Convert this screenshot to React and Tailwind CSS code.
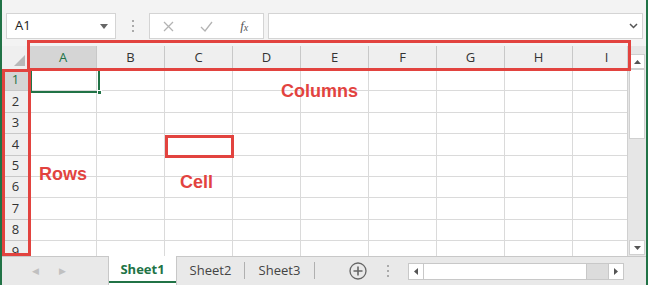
import React from 'react';

const cols = ['A', 'B', 'C', 'D', 'E', 'F', 'G', 'H', 'I'];
const rows = [1, 2, 3, 4, 5, 6, 7, 8, 9];

function App() {
  return (
    <div className="relative w-[648px] h-[285px] overflow-hidden bg-[#f3f3f3] border-l-2 border-r-2 border-[#217346] font-['Open_Sans',sans-serif] text-[#333]">
      {/* formula bar */}
      <div className="flex items-start h-[46px] pt-[13px] pl-[4px]">
        <div className="flex items-center w-[110px] h-[26px] bg-white border border-[#d4d4d4] pl-[8px] pr-[7px]">
          <span className="text-[13px] text-[#222] flex-1">A1</span>
          <svg width="8" height="5" viewBox="0 0 8 5"><path d="M0 0h8L4 5z" fill="#666" /></svg>
        </div>
        <div className="w-[33px] h-[26px] flex flex-col items-center justify-center gap-[3px]">
          <span className="w-[2px] h-[2px] bg-[#aaa]" />
          <span className="w-[2px] h-[2px] bg-[#aaa]" />
          <span className="w-[2px] h-[2px] bg-[#aaa]" />
        </div>
        <div className="flex items-center w-[115px] h-[26px] bg-white border border-[#d4d4d4]">
          <div className="w-[38px] flex justify-center">
            <svg width="11" height="11" viewBox="0 0 11 11"><path d="M1 1l9 9M10 1l-9 9" stroke="#b3b3b3" strokeWidth="1.3" /></svg>
          </div>
          <div className="w-[38px] flex justify-center">
            <svg width="13" height="11" viewBox="0 0 13 11"><path d="M1 6l4 4 7-9" stroke="#b3b3b3" strokeWidth="1.3" fill="none" /></svg>
          </div>
          <div className="w-[38px] flex justify-center font-['Liberation_Serif',serif] italic text-[13px] text-[#555]">
            f<span className="text-[10px] mt-[4px]">x</span>
          </div>
        </div>
        <div className="flex items-center justify-end w-[375px] h-[26px] ml-[4px] bg-white border border-[#d4d4d4] pr-[4px]">
          <svg width="9" height="6" viewBox="0 0 9 6"><path d="M1 1l3.5 3.5L8 1" stroke="#555" strokeWidth="1.5" fill="none" /></svg>
        </div>
      </div>

      {/* sheet area */}
      <div className="flex h-[210px] bg-white">
        <div className="w-[625px] overflow-hidden">
          <div className="flex h-[24px] bg-[#efefef] border-b border-[#c8c8c8]">
            <div className="relative w-[28px] shrink-0 border-r border-[#c8c8c8]">
              <svg className="absolute right-[4px] bottom-[3px]" width="11" height="11" viewBox="0 0 11 11"><path d="M11 0v11H0z" fill="#b8b8b8" /></svg>
            </div>
            {cols.map((c, i) => (
              <div
                key={c}
                className={`shrink-0 flex items-center justify-center text-[13px] border-r border-[#c8c8c8] ${
                  i === 0 ? 'w-[67px] bg-[#d5d5d5] text-[#217346]' : 'w-[68px] text-[#333]'
                }`}
              >
                {c}
              </div>
            ))}
          </div>
          {rows.map((r) => (
            <div key={r} className="flex h-[21.4px]">
              <div
                className={`w-[28px] shrink-0 flex items-center justify-center text-[13px] border-r border-b border-[#c8c8c8] ${
                  r === 1 ? 'bg-[#d5d5d5] text-[#217346]' : 'bg-[#efefef] text-[#333]'
                }`}
              >
                {r}
              </div>
              {cols.map((c, i) => (
                <div
                  key={c}
                  className={`shrink-0 border-r border-b border-[#dadada] ${i === 0 ? 'w-[67px]' : 'w-[68px]'}`}
                />
              ))}
            </div>
          ))}
        </div>
        <div className="flex flex-col w-[19px] bg-[#e6e6e6] border-l border-[#d0d0d0] pt-[8px] pb-[1px] px-[1px]">
          <div className="h-[15px] bg-white border border-[#d0d0d0] flex items-center justify-center">
            <svg width="7" height="4" viewBox="0 0 7 4"><path d="M0 4h7L3.5 0z" fill="#555" /></svg>
          </div>
          <div className="h-[70px] bg-white border border-[#d0d0d0]" />
          <div className="flex-1" />
          <div className="h-[15px] bg-white border border-[#d0d0d0] flex items-center justify-center">
            <svg width="7" height="4" viewBox="0 0 7 4"><path d="M0 0h7L3.5 4z" fill="#555" /></svg>
          </div>
        </div>
      </div>

      {/* sheet tabs */}
      <div className="flex items-stretch h-[29px] bg-[#e9e9e9] border-t border-[#c8c8c8]">
        <div className="w-[106px] flex items-center gap-[20px] pl-[30px] text-[9px] text-[#c0c0c0]">
          <span>◀</span>
          <span>▶</span>
        </div>
        <div className="w-[69px] -mt-[1px] bg-white border-x border-[#c8c8c8] flex flex-col items-center justify-center">
          <span className="text-[13px] font-bold text-[#217346] mt-[2px]">Sheet1</span>
          <span className="w-full h-[2px] bg-[#217346] mt-[1px]" />
        </div>
        <div className="flex items-center pb-[2px]">
          <span className="w-[68px] text-center text-[13px] text-[#444] border-r border-[#b0b0b0] leading-[17px]">Sheet2</span>
          <span className="w-[70px] text-center text-[13px] text-[#444] border-r border-[#b0b0b0] leading-[17px]">Sheet3</span>
        </div>
        <div className="w-[53px] flex items-center justify-end pr-[1px]">
          <svg width="18" height="18" viewBox="0 0 18 18">
            <circle cx="9" cy="9" r="8" fill="none" stroke="#666" strokeWidth="1.3" />
            <path d="M9 4.5v9M4.5 9h9" stroke="#666" strokeWidth="1.6" />
          </svg>
        </div>
        <div className="w-[40px] flex flex-col items-center justify-center gap-[3px]">
          <span className="w-[2px] h-[2px] bg-[#aaa]" />
          <span className="w-[2px] h-[2px] bg-[#aaa]" />
          <span className="w-[2px] h-[2px] bg-[#aaa]" />
        </div>
        <div className="flex items-center">
          <div className="flex h-[17px] w-[216px] bg-[#dcdcdc] border border-[#c8c8c8]">
            <div className="w-[15px] bg-white border-r border-[#c8c8c8] flex items-center justify-center">
              <svg width="4" height="7" viewBox="0 0 4 7"><path d="M4 0v7L0 3.5z" fill="#555" /></svg>
            </div>
            <div className="w-[163px] bg-white border-r border-[#c8c8c8]" />
            <div className="flex-1" />
            <div className="w-[15px] bg-white border-l border-[#c8c8c8] flex items-center justify-center">
              <svg width="4" height="7" viewBox="0 0 4 7"><path d="M0 0v7l4-3.5z" fill="#555" /></svg>
            </div>
          </div>
        </div>
      </div>

      {/* selected cell A1 */}
      <div className="absolute left-[28px] top-[69px] w-[70px] h-[24px] border-2 border-[#217346]">
        <span className="absolute -right-[4px] -bottom-[4px] w-[5px] h-[5px] bg-[#217346] border border-white" />
      </div>

      {/* annotations */}
      <div className="absolute left-[25px] top-[40px] w-[604px] h-[31px] border-[3px] border-[#e2433f]" />
      <div className="absolute left-0 top-[69px] w-[29px] h-[187px] border-[3px] border-[#e2433f]" />
      <div className="absolute left-[163px] top-[135px] w-[69px] h-[23px] border-[3px] border-[#e2433f]" />
      <span className="absolute left-[279px] top-[78px] font-['Liberation_Sans',sans-serif] font-bold text-[18px] text-[#e2433f]">Columns</span>
      <span className="absolute left-[37px] top-[161px] font-['Liberation_Sans',sans-serif] font-bold text-[18px] text-[#e2433f]">Rows</span>
      <span className="absolute left-[178px] top-[169px] font-['Liberation_Sans',sans-serif] font-bold text-[18px] text-[#e2433f]">Cell</span>
    </div>
  );
}

export default App;
